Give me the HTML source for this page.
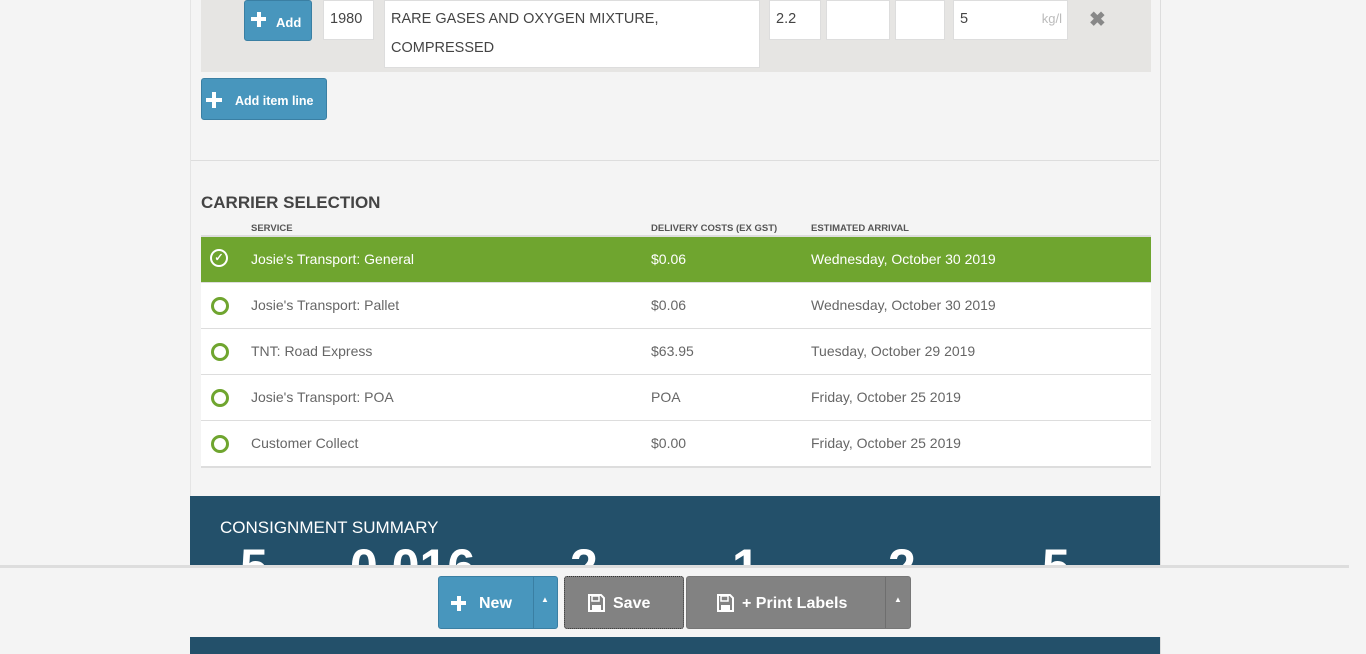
<!DOCTYPE html><html><head><style>
body{margin:0;width:1366px;height:654px;overflow:hidden;background:#f4f4f4;font-family:"Liberation Sans",sans-serif;position:relative}
.abs{position:absolute}
.inp{position:absolute;background:#fff;border:1px solid #ddd;box-sizing:border-box;font-size:14.5px;color:#444;padding:10px 6px}
.btn{position:absolute;background:#4896bd;border:1px solid #3a7fa3;border-radius:3px;color:#fff;font-weight:bold;box-sizing:border-box}
.row{position:absolute;left:201px;width:950px;height:45px;background:#fff;border-bottom:2px solid #ddd;font-size:14px;color:#666}
.row span{position:absolute;top:14px}
.circ{position:absolute;left:10px;top:14px;width:12px;height:12px;border:3px solid #6fa52f;border-radius:50%}
.num{position:absolute;top:538px;color:#fff;font-size:50px;font-weight:bold}
.plus{position:absolute;background:#fff}
</style></head><body>
<div class="abs" style="left:190px;top:0;width:969px;height:654px;border-right:1px solid #ddd;border-left:1px solid #e4e4e4"></div>
<div class="abs" style="left:201px;top:0;width:950px;height:72px;background:#e6e5e3"></div>
<div class="btn" style="left:244px;top:0;width:68px;height:41px;font-size:13px"><i class="plus" style="left:6px;top:16px;width:15px;height:4px"></i><i class="plus" style="left:11.5px;top:10.5px;width:4px;height:15px"></i><span style="position:absolute;left:31px;top:14px">Add</span></div>
<div class="inp" style="left:323px;top:0;width:51px;height:40px">1980</div>
<div class="inp" style="left:384px;top:0;width:376px;height:68px;line-height:29px;padding:4px 6px">RARE GASES AND OXYGEN MIXTURE, COMPRESSED</div>
<div class="inp" style="left:769px;top:0;width:52px;height:40px">2.2</div>
<div class="inp" style="left:826px;top:0;width:64px;height:40px"></div>
<div class="inp" style="left:895px;top:0;width:50px;height:40px"></div>
<div class="inp" style="left:953px;top:0;width:115px;height:40px">5<span style="position:absolute;right:5px;top:10px;color:#bbb;font-size:13px">kg/l</span></div>
<div class="abs" style="left:1089px;top:7px;color:#888;font-size:20px;font-weight:bold">✖</div>
<div class="btn" style="left:201px;top:78px;width:126px;height:42px;font-size:12.5px"><i class="plus" style="left:4px;top:19px;width:16px;height:4px"></i><i class="plus" style="left:10px;top:13px;width:4px;height:16px"></i><span style="position:absolute;left:33px;top:15px">Add item line</span></div>
<div class="abs" style="left:191px;top:160px;width:968px;height:1px;background:#ddd"></div>
<div class="abs" style="left:201px;top:193px;font-size:17px;font-weight:bold;color:#444">CARRIER SELECTION</div>
<div class="abs" style="left:251px;top:223px;font-size:9.5px;font-weight:bold;color:#555">SERVICE</div>
<div class="abs" style="left:651px;top:223px;font-size:9.5px;font-weight:bold;color:#555">DELIVERY COSTS (EX GST)</div>
<div class="abs" style="left:811px;top:223px;font-size:9.5px;font-weight:bold;color:#555">ESTIMATED ARRIVAL</div>
<div class="abs" style="left:201px;top:235px;width:950px;height:2px;background:#ddd"></div>
<div class="row" style="top:237px;background:#6fa52f;color:#fff;border-bottom-color:#ddd"><span style="left:9px;top:12px;width:14px;height:14px;border:2px solid #fff;border-radius:50%;text-align:center;font-size:11px;font-weight:bold;line-height:14px">✓</span><span style="left:50px">Josie's Transport: General</span><span style="left:450px">$0.06</span><span style="left:610px">Wednesday, October 30 2019</span></div>
<div class="row" style="top:283px"><i class="circ"></i><span style="left:50px">Josie's Transport: Pallet</span><span style="left:450px">$0.06</span><span style="left:610px">Wednesday, October 30 2019</span></div>
<div class="row" style="top:329px"><i class="circ"></i><span style="left:50px">TNT: Road Express</span><span style="left:450px">$63.95</span><span style="left:610px">Tuesday, October 29 2019</span></div>
<div class="row" style="top:375px"><i class="circ"></i><span style="left:50px">Josie's Transport: POA</span><span style="left:450px">POA</span><span style="left:610px">Friday, October 25 2019</span></div>
<div class="row" style="top:421px"><i class="circ"></i><span style="left:50px">Customer Collect</span><span style="left:450px">$0.00</span><span style="left:610px">Friday, October 25 2019</span></div>
<div class="abs" style="left:190px;top:496px;width:970px;height:158px;background:#23506a"></div>
<div class="abs" style="left:220px;top:518px;color:#fff;font-size:17px">CONSIGNMENT SUMMARY</div>
<div class="num" style="left:240px">5</div><div class="num" style="left:350px">0.016</div><div class="num" style="left:570px">2</div><div class="num" style="left:732px">1</div><div class="num" style="left:888px">2</div><div class="num" style="left:1042px">5</div>
<div class="abs" style="left:0;top:565px;width:1349px;height:72px;background:#f4f4f4;border-top:3px solid #ddd;box-sizing:border-box"></div>
<div class="btn" style="left:438px;top:576px;width:120px;height:53px;font-size:16px"><i class="plus" style="left:12px;top:24px;width:15px;height:4px"></i><i class="plus" style="left:17.5px;top:18.5px;width:4px;height:15px"></i><span style="position:absolute;left:40px;top:18px">New</span><span style="position:absolute;left:94px;top:0;width:1px;height:51px;background:#3a7fa3"></span><span style="position:absolute;left:102px;top:18px;font-size:8px">▲</span></div>
<div class="btn" style="left:564px;top:576px;width:120px;height:53px;background:#828282;border:1px dotted #333;font-size:16px"><svg style="position:absolute;left:23px;top:17px" width="17" height="18" viewBox="0 0 17 18"><path d="M1 1h12l3 3v13H1z" fill="none" stroke="#fff" stroke-width="2"/><rect x="4" y="2" width="7" height="5" fill="none" stroke="#fff" stroke-width="1.5"/><rect x="4" y="11" width="9" height="5" fill="#fff"/></svg><span style="position:absolute;left:48px;top:18px">Save</span></div>
<div class="btn" style="left:686px;top:576px;width:225px;height:53px;background:#828282;border-color:#777;font-size:16px"><svg style="position:absolute;left:30px;top:17px" width="17" height="18" viewBox="0 0 17 18"><path d="M1 1h12l3 3v13H1z" fill="none" stroke="#fff" stroke-width="2"/><rect x="4" y="2" width="7" height="5" fill="none" stroke="#fff" stroke-width="1.5"/><rect x="4" y="11" width="9" height="5" fill="#fff"/></svg><span style="position:absolute;left:55px;top:18px">+ Print Labels</span><span style="position:absolute;left:198px;top:0;width:1px;height:51px;background:#6e6e6e"></span><span style="position:absolute;left:207px;top:18px;font-size:8px">▲</span></div>
</body></html>
